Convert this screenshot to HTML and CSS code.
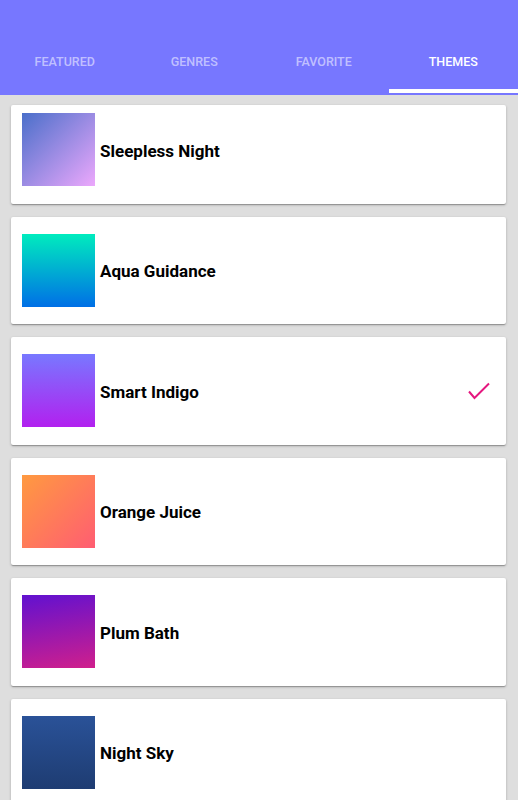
FILE: index.html
```html
<!DOCTYPE html>
<html lang="en">
<head>
    <meta charset="UTF-8">
    <meta name="viewport" content="width=device-width, initial-scale=1.0">
    <title>Themes</title>
    <link rel="stylesheet" href="styles.css">
</head>
<body>
    <header class="app-bar">
        <nav class="tabs">
            <div class="tab">Featured</div>
            <div class="tab">Genres</div>
            <div class="tab">Favorite</div>
            <div class="tab active">Themes</div>
        </nav>
    </header>

    <div class="theme-list">
        <div class="theme-card first">
            <div class="swatch sleepless"></div>
            <div class="theme-name">Sleepless Night</div>
        </div>
        <div class="theme-card">
            <div class="swatch aqua"></div>
            <div class="theme-name">Aqua Guidance</div>
        </div>
        <div class="theme-card">
            <div class="swatch indigo"></div>
            <div class="theme-name">Smart Indigo</div>
            <svg class="check" width="22" height="18" viewBox="0 0 22 18">
                <polyline points="1,9.5 6.5,16 21,1.5" fill="none" stroke="#e5177f" stroke-width="2"/>
            </svg>
        </div>
        <div class="theme-card">
            <div class="swatch orange"></div>
            <div class="theme-name">Orange Juice</div>
        </div>
        <div class="theme-card">
            <div class="swatch plum"></div>
            <div class="theme-name">Plum Bath</div>
        </div>
        <div class="theme-card">
            <div class="swatch night"></div>
            <div class="theme-name">Night Sky</div>
        </div>
    </div>
</body>
</html>
```

FILE: styles.css
```css
body {
    margin: 0;
    background-color: #dedede;
    font-family: Roboto, "Liberation Sans", Arial, sans-serif;
    height: 800px;
    overflow: hidden;
}
.app-bar {
    height: 95px;
    background-color: #7777ff;
    display: flex;
    align-items: flex-end;
    padding-bottom: 2px;
    box-sizing: border-box;
}
.tabs {
    display: flex;
    width: 100%;
}
.tab {
    flex: 1;
    height: 48px;
    padding-top: 9px;
    box-sizing: border-box;
    text-align: center;
    text-transform: uppercase;
    font-size: 12.5px;
    font-weight: 500;
    line-height: 16px;
    color: rgba(255, 255, 255, 0.55);
    border-bottom: 4px solid transparent;
}
.tab.active {
    color: #ffffff;
    border-bottom-color: #ffffff;
}
.theme-list {
    padding: 10px 12px 0 11px;
}
.theme-card {
    display: flex;
    align-items: center;
    background-color: #ffffff;
    border-radius: 2px;
    padding: 17px 16px 17.5px 11px;
    margin-bottom: 13px;
    box-shadow: 0 1px 3px rgba(0, 0, 0, 0.2), 0 1px 1px rgba(0, 0, 0, 0.14), 0 2px 1px -1px rgba(0, 0, 0, 0.12);
}
.theme-card.first {
    padding-top: 8px;
}
.swatch {
    width: 73px;
    height: 73px;
    flex-shrink: 0;
    margin-right: 5px;
}
.theme-name {
    font-size: 17px;
    font-weight: 700;
    color: #000000;
    padding-top: 2px;
}
.check {
    margin-left: auto;
}
.sleepless {
    background: linear-gradient(135deg, #4a6fca, #eca8fc);
}
.aqua {
    background: linear-gradient(180deg, #00ecbe, #006fe6);
}
.indigo {
    background: linear-gradient(180deg, #7878ff, #b220ef);
}
.orange {
    background: linear-gradient(135deg, #ff9a40, #ff5d72);
}
.plum {
    background: linear-gradient(170deg, #6111d0, #d01f8c);
}
.night {
    background: linear-gradient(180deg, #2a5298, #1e3c72);
}
```
